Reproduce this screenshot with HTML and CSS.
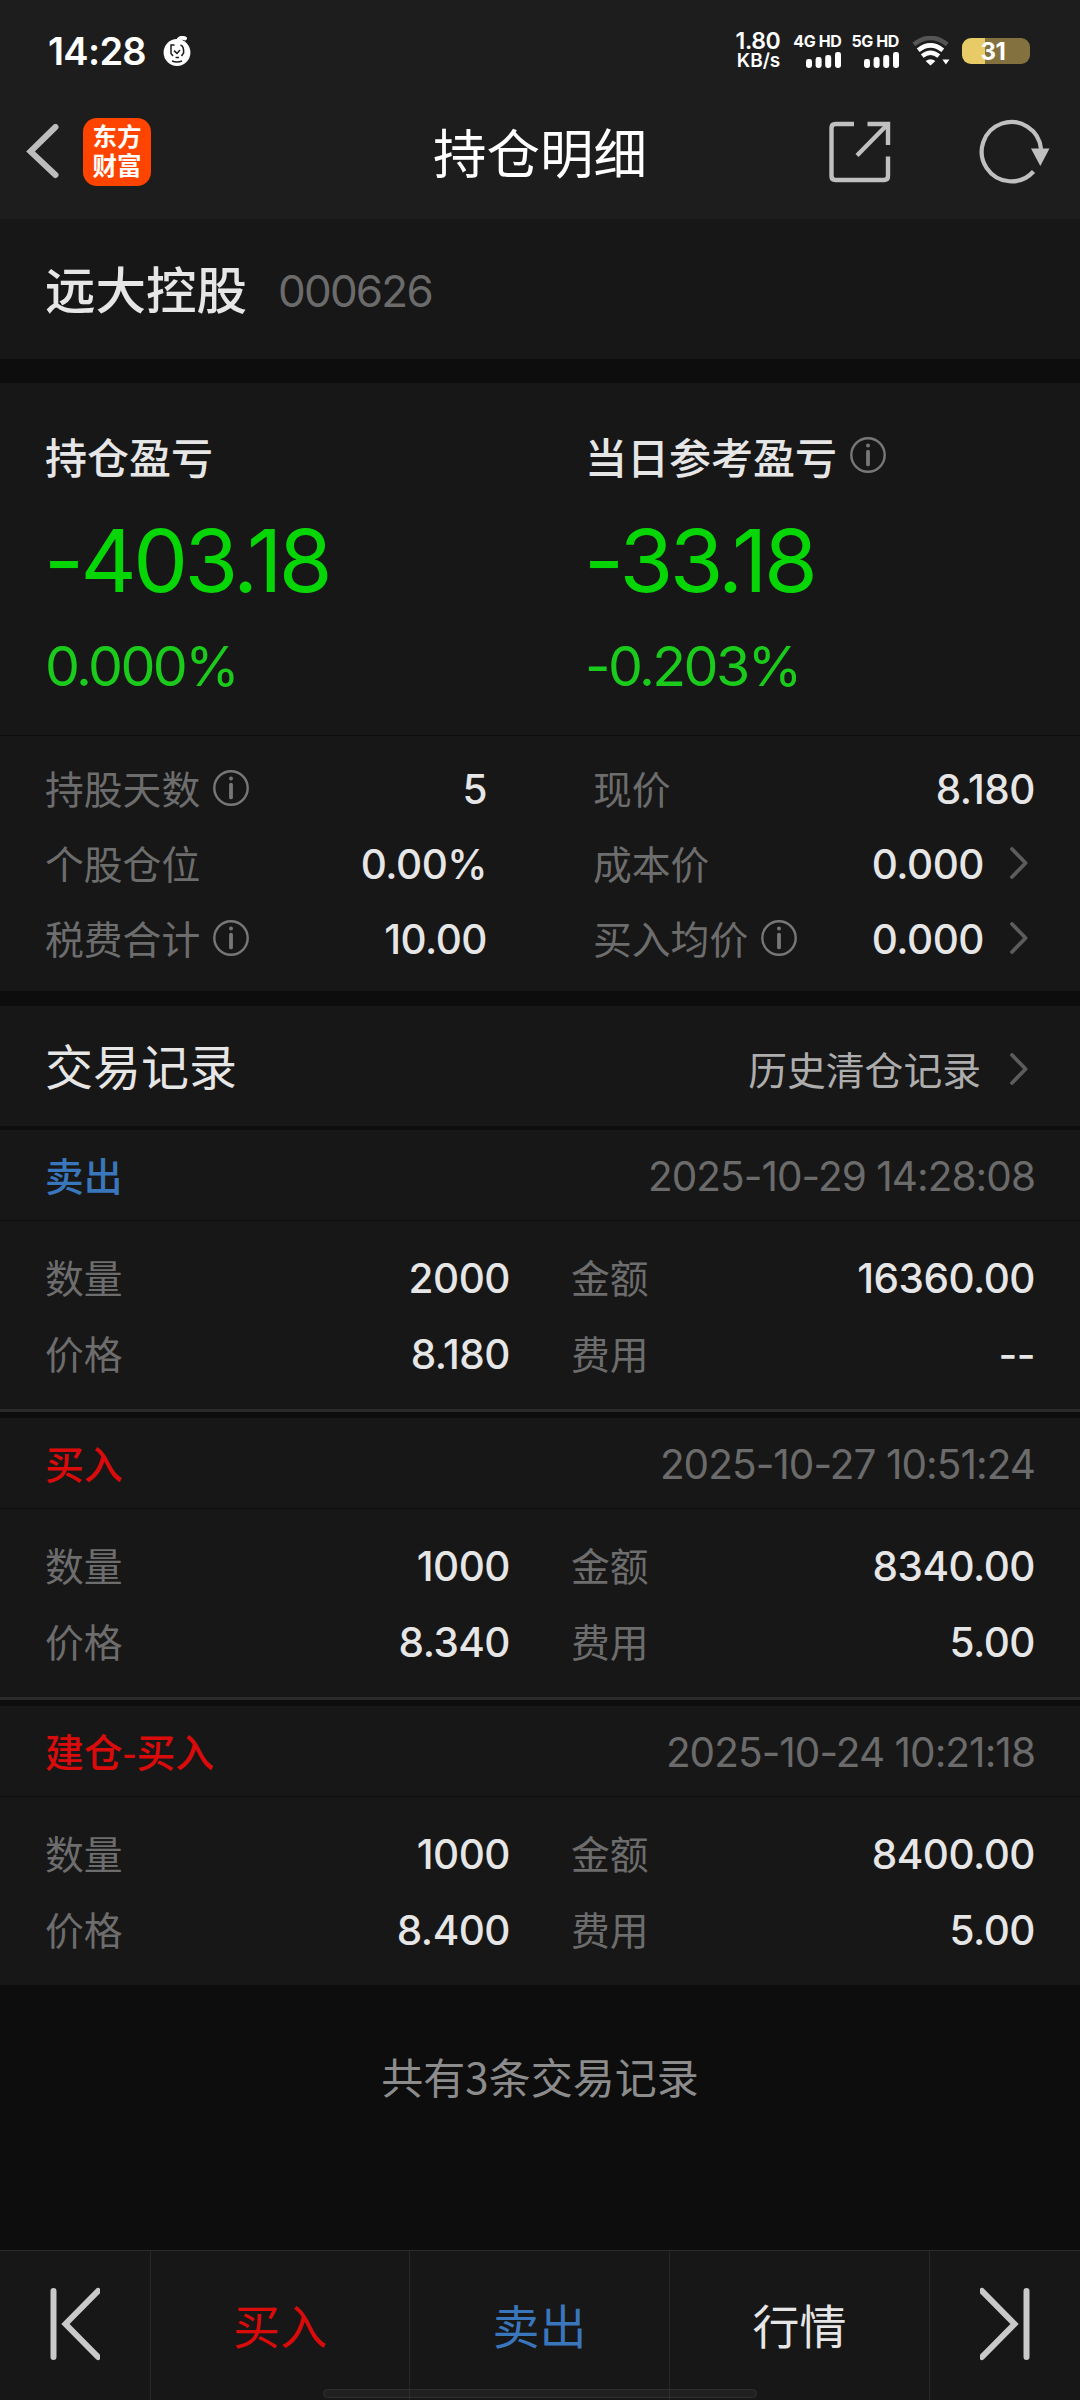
FILE: index.html
```html
<!DOCTYPE html>
<html lang="zh-CN">
<head>
<meta charset="utf-8">
<title>持仓明细</title>
<link rel="stylesheet" href="styles.css">
</head>
<body>
<svg class="defs" width="0" height="0">
  <symbol id="info" viewBox="0 0 36 36">
    <circle cx="18" cy="18" r="16.7" fill="none" stroke="currentColor" stroke-width="2.4"/>
    <circle cx="18" cy="8.6" r="2" fill="currentColor"/>
    <path d="M18 14.6V27.4" stroke="currentColor" stroke-width="3.8" stroke-linecap="round"/>
  </symbol>
  <symbol id="chevron" viewBox="0 0 18 32">
    <path d="M2 2L15.6 16L2 30" fill="none" stroke="currentColor" stroke-width="3.8" stroke-linecap="round" stroke-linejoin="round"/>
  </symbol>
  <symbol id="bars" viewBox="0 0 35 16">
    <g fill="#fff"><rect x="0" y="7" width="6" height="9" rx="2.4"/><rect x="9.6" y="5" width="6" height="11" rx="2.4"/><rect x="19.2" y="3" width="6" height="13" rx="2.4"/><rect x="29" y="0" width="6" height="16" rx="2.4"/></g>
  </symbol>
</svg>
<div class="screen">
  <header class="top">
    <div class="status">
      <span class="clock num">14:28</span>
      <svg class="fruit" width="28" height="30" viewBox="0 0 28 30">
        <circle cx="14" cy="16.5" r="13.4" fill="#fff"/>
        <path d="M15.5 6C15 2.5 18 1 22 2.4" fill="none" stroke="#fff" stroke-width="4" stroke-linecap="round"/>
        <path d="M11.5 9H8V17.5L10 20M17.5 9Q21 10 20.6 17L18.5 20M11 14.6L14 17.4L17 14M12.6 21.4H16M9 25Q14 27 19 25" fill="none" stroke="#1d1d1d" stroke-width="1.5"/>
      </svg>
      <div class="speed num"><span class="rate">1.80</span><span class="unit">KB/s</span></div>
      <div class="sim num"><span>4G HD</span><svg width="35" height="16"><use href="#bars"/></svg></div>
      <div class="sim num"><span>5G HD</span><svg width="35" height="16"><use href="#bars"/></svg></div>
      <svg class="wifi" width="38" height="30" viewBox="0 0 38 30">
        <g fill="none">
          <path d="M1.8 8.4Q18.5 -4.4 35.2 8.4" stroke="#555" stroke-width="4.6"/>
          <path d="M6.2 14.2Q18.5 4.6 30.8 14.2" stroke="#fff" stroke-width="4.6"/>
          <path d="M10.2 20Q18.5 13.4 26.8 20" stroke="#fff" stroke-width="4.4"/>
        </g>
        <path d="M13.6 25Q18.5 21.6 23.4 25L18.5 29.6Z" fill="#fff"/>
        <path d="M30.4 23.4H37.4L33.9 28.6Z" fill="#fff"/>
      </svg>
      <div class="battery num"><span>31</span></div>
    </div>
    <nav class="titlebar">
      <svg class="back" width="34" height="56" viewBox="0 0 34 56"><path d="M29.5 3L4.5 27.500L29.5 51" fill="none" stroke="#bdbdbd" stroke-width="6" stroke-linecap="round"/></svg>
      <div class="logo"><span>东方</span><span>财富</span></div>
      <h1>持仓明细</h1>
      <svg class="share" width="62" height="62" viewBox="0 0 62 62"><g fill="none" stroke="#c0c0c0" stroke-width="4.4"><path d="M25 3H6.500Q2.500 3 2.500 7V55Q2.500 59 6.500 59H55Q59 59 59 55V35.500"/><path d="M38.500 3H59V24"/><path d="M28 34.500L57 5"/></g></svg>
      <svg class="refresh" width="72" height="66" viewBox="0 0 72 66"><path d="M62 30A29.700 29.700 0 1 0 54.500 52.500" fill="none" stroke="#c0c0c0" stroke-width="4.200"/><path d="M52 29.500H70.500L61.300 47Z" fill="#c0c0c0"/></svg>
    </nav>
  </header>

  <section class="stock panel"><h2>远大控股</h2><span class="code num">000626</span></section>

  <section class="summary panel">
    <div class="profit">
      <div class="label">持仓盈亏</div>
      <div class="amount num">-403.18</div>
      <div class="percent num">0.000%</div>
    </div>
    <div class="profit">
      <div class="label">当日参考盈亏<svg class="info" width="36" height="36"><use href="#info"/></svg></div>
      <div class="amount num">-33.18</div>
      <div class="percent num">-0.203%</div>
    </div>
  </section>

  <section class="stats panel">
    <div class="col">
      <div class="row"><span class="key">持股天数<svg class="info" width="36" height="36"><use href="#info"/></svg></span><span class="val num">5</span></div>
      <div class="row"><span class="key">个股仓位</span><span class="val num">0.00%</span></div>
      <div class="row"><span class="key">税费合计<svg class="info" width="36" height="36"><use href="#info"/></svg></span><span class="val num">10.00</span></div>
    </div>
    <div class="col">
      <div class="row"><span class="key">现价</span><span class="val num">8.180</span></div>
      <div class="row"><span class="key">成本价</span><span class="val num">0.000<svg class="go" width="18" height="32"><use href="#chevron"/></svg></span></div>
      <div class="row"><span class="key">买入均价<svg class="info" width="36" height="36"><use href="#info"/></svg></span><span class="val num">0.000<svg class="go" width="18" height="32"><use href="#chevron"/></svg></span></div>
    </div>
  </section>

  <section class="trades panel"><h3>交易记录</h3><a class="history">历史清仓记录<svg class="go" width="18" height="32"><use href="#chevron"/></svg></a></section>

  <article class="record panel">
    <div class="head"><span class="kind sell">卖出</span><time class="num">2025-10-29 14:28:08</time></div>
    <div class="body">
      <div class="row"><span class="key">数量</span><span class="val num">2000</span></div>
      <div class="row"><span class="key">金额</span><span class="val num">16360.00</span></div>
      <div class="row"><span class="key">价格</span><span class="val num">8.180</span></div>
      <div class="row"><span class="key">费用</span><span class="val num">--</span></div>
    </div>
  </article>
  <article class="record panel">
    <div class="head"><span class="kind buy">买入</span><time class="num">2025-10-27 10:51:24</time></div>
    <div class="body">
      <div class="row"><span class="key">数量</span><span class="val num">1000</span></div>
      <div class="row"><span class="key">金额</span><span class="val num">8340.00</span></div>
      <div class="row"><span class="key">价格</span><span class="val num">8.340</span></div>
      <div class="row"><span class="key">费用</span><span class="val num">5.00</span></div>
    </div>
  </article>
  <article class="record panel">
    <div class="head"><span class="kind buy">建仓-买入</span><time class="num">2025-10-24 10:21:18</time></div>
    <div class="body">
      <div class="row"><span class="key">数量</span><span class="val num">1000</span></div>
      <div class="row"><span class="key">金额</span><span class="val num">8400.00</span></div>
      <div class="row"><span class="key">价格</span><span class="val num">8.400</span></div>
      <div class="row"><span class="key">费用</span><span class="val num">5.00</span></div>
    </div>
  </article>

  <p class="total">共有3条交易记录</p>

  <footer class="actions">
    <div class="cell"><svg width="50" height="74" viewBox="0 0 50 74"><path d="M3.500 4V70M48 4L15.500 37L48 70" fill="none" stroke="#c9c9c9" stroke-width="6" stroke-linecap="round"/></svg></div>
    <div class="cell buy">买入</div>
    <div class="cell sell">卖出</div>
    <div class="cell">行情</div>
    <div class="cell"><svg width="50" height="74" viewBox="0 0 50 74"><path d="M46.500 4V70M2 4L34.500 37L2 70" fill="none" stroke="#c9c9c9" stroke-width="6" stroke-linecap="round"/></svg></div>
    <i class="home"></i>
  </footer>
</div>
</body>
</html>
```

FILE: styles.css
```css
* { box-sizing: border-box; }
body {
  margin: 0;
  background: #0d0d0d;
  color: #e6e6e6;
  font-family: "Noto Sans CJK SC", sans-serif;
}
h1, h2, h3, p { margin: 0; font-weight: 400; }
.defs { position: absolute; }
.num { font-family: Inter, "Noto Sans CJK SC", sans-serif; }
.screen {
  width: 1080px;
  height: 2400px;
  display: flex;
  flex-direction: column;
  overflow: hidden;
}
.panel { background: #171717; }
.buy { color: #d90b0b; }
.sell { color: #3a76bb; }

/* status bar and title bar */
.top { height: 219px; background: #1d1d1d; }
.status {
  height: 102px;
  padding: 0 50px 0 48px;
  display: flex;
  align-items: center;
  color: #fff;
}
.clock { width: 115px; font-size: 38px; font-weight: 600; line-height: 46px; letter-spacing: -0.7px; }
.fruit { margin-right: auto; }
.speed { display: flex; flex-direction: column; align-items: flex-end; font-weight: 600; margin-right: 13px; }
.rate { font-size: 23px; line-height: 20px; letter-spacing: -0.4px; }
.unit { font-size: 19px; line-height: 20px; letter-spacing: 0; }
.sim { display: flex; flex-direction: column; align-items: flex-end; gap: 4px; margin-right: 10px; font-size: 16px; font-weight: 700; line-height: 14px; letter-spacing: -0.4px; white-space: nowrap; }
.wifi { margin: 0 12px 0 3px; }
.battery {
  width: 68px;
  height: 26px;
  padding-right: 6px;
  border-radius: 9px;
  background: linear-gradient(90deg, #e8cb66 23px, #83723f 23px);
  font-size: 24px;
  font-weight: 700;
  line-height: 27px;
  letter-spacing: -0.5px;
  text-align: center;
}
.titlebar { height: 99px; padding: 0 29px 0 26px; display: grid; grid-template-columns: 57px 68px 1fr 62px 88px 72px; align-items: center; }
.logo {
  width: 68px;
  height: 68px;
  border-radius: 14px;
  background: #ff4400;
  color: #fff;
  display: flex;
  flex-direction: column;
  align-items: center;
  padding-top: 3px;
  font-size: 24.500px;
  font-weight: 700;
  line-height: 29px;
}
h1 { font-size: 53.500px; color: #fff; line-height: 80px; padding: 0 0 2px 282px; white-space: nowrap; }
.refresh { grid-column: 6; }

/* stock name */
.stock { height: 140px; padding: 30px 45px 0; display: flex; align-items: baseline; gap: 31px; line-height: 76px; }
h2 { font-size: 50.500px; font-weight: 500; }
.code { font-size: 44px; color: #6b6b6b; letter-spacing: -1.8px; transform: translateY(-2px); }

/* profit summary */
.summary { height: 352px; margin-top: 24px; padding: 0 45px; display: grid; grid-template-columns: 540px 1fr; }
.label { display: flex; align-items: center; height: 60px; margin-top: 42px; font-size: 42px; font-weight: 500; }
.info { color: #777; margin-left: 13px; }
.amount { font-size: 87px; line-height: 100px; margin-top: 26px; margin-left: -1px; letter-spacing: -3.500px; color: #06d606; }
.percent { font-size: 55.500px; line-height: 60px; margin-top: 25px; letter-spacing: -2.6px; color: #1bcb1b; }

/* position stats */
.stats { height: 255px; margin-top: 1px; padding: 14px 45px 0; display: grid; grid-template-columns: 442px 442px; column-gap: 106px; }
.row { display: flex; justify-content: space-between; align-items: baseline; height: 75px; line-height: 75px; }
.key { font-size: 38.800px; color: #6d6d6d; }
.val { font-size: 40.500px; font-weight: 500; letter-spacing: -0.5px; }
.key .info { vertical-align: -2px; }
.go { color: #5c5c5c; margin-left: 26px; margin-right: 7px; vertical-align: 0; }

/* trade list */
.trades { height: 120px; margin-top: 15px; margin-bottom: 4px; padding: 18px 45px 0; display: flex; justify-content: space-between; align-items: baseline; line-height: 80px; }
h3 { font-size: 48px; }
.history { font-size: 38.800px; color: #adadad; }
.history .go { margin-left: 29px; }
.record { height: 282px; margin-bottom: 6px; border-bottom: 3px solid #2b2b2b; }
.record:last-of-type { height: 279px; border-bottom: 0; margin-bottom: 0; }
.head { height: 91px; border-bottom: 1px solid #0d0d0d; padding: 0 45px; display: flex; justify-content: space-between; align-items: baseline; line-height: 89px; }
.kind { font-size: 38.800px; font-weight: 500; }
time { font-size: 40.500px; color: #6b6b6b; letter-spacing: -0.950px; }
.body { padding: 17px 45px 0; display: grid; grid-template-columns: 465px 464px; column-gap: 61px; }
.body .row { height: 76px; line-height: 76px; }
.total { font-size: 42px; line-height: 60px; margin-top: 61px; color: #8c8c8c; text-align: center; }

/* bottom actions */
.actions { position: relative; height: 150px; margin-top: auto; border-top: 1px solid #2b2b2b; background: #171717; display: grid; grid-template-columns: 151px 259px 260px 260px 150px; font-size: 47px; }
.cell { display: flex; align-items: center; justify-content: center; border-right: 1px solid #272727; padding-bottom: 4px; }
.cell:nth-child(5) { border-right: 0; }
.home { position: absolute; left: 323px; bottom: 2px; width: 434px; height: 9px; border: 1px solid #303030; border-radius: 5px; background: rgba(255, 255, 255, 0.04); }
```
